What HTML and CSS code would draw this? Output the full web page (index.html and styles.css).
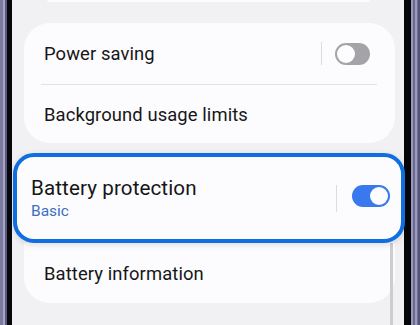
FILE: index.html
```html
<!DOCTYPE html>
<html>
<head>
<meta charset="utf-8">
<link rel="stylesheet" href="styles.css">
</head>
<body>
<div class="bezel-left"></div>
<div class="screen">
  <div class="card-remnant"></div>
  <div class="card card-mid">
    <div class="row row-top">
      <span class="label">Power saving</span>
      <div class="controls">
        <span class="vsep"></span>
        <span class="toggle toggle-off"><span class="knob"></span></span>
      </div>
    </div>
    <div class="divider"></div>
    <div class="row row-bottom">
      <span class="label">Background usage limits</span>
    </div>
  </div>
  <div class="card card-focus">
    <div class="text-block">
      <span class="title">Battery protection</span>
      <span class="subtitle">Basic</span>
    </div>
    <div class="controls controls-focus">
      <span class="vsep vsep-focus"></span>
      <span class="toggle toggle-on"><span class="knob"></span></span>
    </div>
  </div>
  <div class="card card-last">
    <span class="label">Battery information</span>
  </div>
  <div class="scrollbar"></div>
</div>
<div class="bezel-right"></div>
</body>
</html>
```

FILE: styles.css
```css
html, body {
  margin: 0;
  padding: 0;
}
body {
  width: 420px;
  height: 325px;
  overflow: hidden;
  display: flex;
  background: #000;
  font-family: Roboto, "Noto Sans", sans-serif;
  color: #161616;
}
.bezel-left {
  width: 12px;
  flex: none;
  background: linear-gradient(to right, #7b7b9f 0 3px, #a4a4c6 3px 5px, #5a5a7e 5px 7px, #08080c 7px 12px);
}
.bezel-right {
  width: 16px;
  flex: none;
  background: linear-gradient(to right, #060609 0 7px, #9898bc 7px 9px, #6a6a8e 9px 11px, #9c9cc0 11px 13px, #6e6e92 13px 14px, #55557a 14px 16px);
}
.screen {
  position: relative;
  width: 392px;
  flex: none;
  background: #f1f1f3;
  display: flex;
  flex-direction: column;
}
.card-remnant {
  margin-left: 35px;
  width: 323px;
  height: 2px;
  background: #fcfcfe;
  border-radius: 0 0 8px 8px;
}
.card {
  background: #fcfcfe;
  box-sizing: border-box;
}
.card-mid {
  margin-top: 21px;
  margin-left: 12px;
  width: 371px;
  height: 120px;
  border-radius: 26px;
  display: flex;
  flex-direction: column;
}
.row {
  display: flex;
  align-items: center;
  justify-content: space-between;
  padding-left: 20px;
  padding-right: 25px;
}
.row-top {
  height: 61px;
}
.row-bottom {
  height: 58px;
}
.label {
  font-size: 18.4px;
  letter-spacing: 0.1px;
}
.divider {
  height: 1px;
  margin: 0 18px 0 17px;
  background: #e2e2e5;
}
.controls {
  display: flex;
  align-items: center;
  gap: 13px;
}
.vsep {
  width: 1px;
  height: 23px;
  background: #dcdcdf;
}
.toggle {
  position: relative;
  display: block;
  height: 22px;
  border-radius: 11px;
  box-sizing: border-box;
}
.toggle-off {
  width: 35px;
  background: #a4a4a8;
}
.toggle-on {
  width: 38px;
  background: #3a78ee;
}
.knob {
  position: absolute;
  top: 2px;
  width: 18px;
  height: 18px;
  border-radius: 50%;
  background: #fdfdff;
}
.toggle-off .knob {
  left: 2px;
}
.toggle-on .knob {
  right: 2px;
}
.card-focus {
  position: relative;
  z-index: 2;
  margin-top: 10px;
  margin-left: 1px;
  width: 392px;
  height: 90px;
  border: 4px solid #0f6ee0;
  border-radius: 21px;
  display: flex;
  align-items: center;
  justify-content: space-between;
  padding-left: 14px;
  padding-right: 11px;
  box-shadow: 0 2px 6px rgba(0, 0, 0, 0.12);
}
.text-block {
  display: flex;
  flex-direction: column;
  padding-top: 2px;
}
.title {
  font-size: 20.6px;
  line-height: 24px;
  letter-spacing: 0.1px;
}
.subtitle {
  font-size: 15.5px;
  line-height: 22px;
  color: #3d6ec2;
}
.controls-focus {
  gap: 15px;
  margin-top: -4px;
}
.vsep-focus {
  height: 27px;
  margin-top: 4px;
}
.card-last {
  margin-left: 12px;
  width: 371px;
  height: 60px;
  border-radius: 0 0 26px 26px;
  display: flex;
  align-items: center;
  padding-left: 20px;
}
.scrollbar {
  position: absolute;
  left: 378px;
  top: 243px;
  width: 3px;
  height: 82px;
  background: #cdcdd1;
}
```
